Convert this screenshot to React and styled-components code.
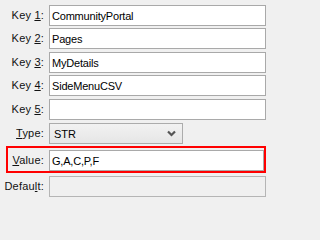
import React from "react";
import styled, { createGlobalStyle } from "styled-components";

const Global = createGlobalStyle`
  html, body { margin: 0; padding: 0; background: #f0f0f0; }
  body { width: 266px; height: 202px; overflow: hidden; }
  * { box-sizing: border-box; }
`;

const Form = styled.div`
  display: flex;
  flex-direction: column;
  padding-top: 5px;
  font-family: "Liberation Sans", Arial, sans-serif;
  font-size: 11px;
  color: #000;
`;

const Row = styled.div`
  display: grid;
  grid-template-columns: ${(p) => (p.$boxed ? "36px" : "44px")} 1fr;
  column-gap: 5px;
  align-items: center;
  margin-top: ${(p) => p.$mt || 0}px;
`;

const Highlight = styled(Row)`
  margin-left: 6px;
  border: 2px solid #ff0000;
  padding: 2px 0 0 0;
  height: 27px;
  align-items: start;
`;

const Label = styled.label`
  text-align: right;
  white-space: nowrap;
  color: #111;
  line-height: 21px;
  letter-spacing: 0.2px;
  u { text-decoration: underline; text-underline-offset: 1px; }
`;

const Field = styled.div`
  height: 21px;
  border: 1px solid ${(p) => (p.$disabled ? "#b5b5b5" : "#a9a9a9")};
  background: ${(p) => (p.$disabled ? "#f0f0f0" : "#fff")};
  padding: 0 2px;
  display: flex;
  align-items: center;
  white-space: nowrap;
  overflow: hidden;
  letter-spacing: -0.2px;
`;

const Select = styled.div`
  width: 134px;
  height: 21px;
  border: 1px solid #acacac;
  background: linear-gradient(#f2f2f2, #e6e6e6);
  display: flex;
  align-items: center;
  justify-content: space-between;
  padding: 0 6px 0 4px;
`;

const Chevron = () => (
  <svg width="9" height="7" viewBox="0 0 9 7">
    <polyline points="1,1.5 4.5,5 8,1.5" fill="none" stroke="#555" strokeWidth="2.2" />
  </svg>
);

const keys = ["CommunityPortal", "Pages", "MyDetails", "SideMenuCSV", ""];
const gaps = [0, 2, 3, 2, 3];

export default function App() {
  return (
    <>
      <Global />
      <Form>
        {keys.map((v, i) => (
          <Row key={i} $mt={gaps[i]}>
            <Label>
              Key <u>{i + 1}</u>:
            </Label>
            <Field>{v}</Field>
          </Row>
        ))}
        <Row $mt={3}>
          <Label>
            <u>T</u>ype:
          </Label>
          <Select>
            <span>STR</span>
            <Chevron />
          </Select>
        </Row>
        <Highlight $mt={2} $boxed>
          <Label>
            <u>V</u>alue:
          </Label>
          <Field>G,A,C,P,F</Field>
        </Highlight>
        <Row $mt={3}>
          <Label>
            Defau<u>l</u>t:
          </Label>
          <Field $disabled />
        </Row>
      </Form>
    </>
  );
}
